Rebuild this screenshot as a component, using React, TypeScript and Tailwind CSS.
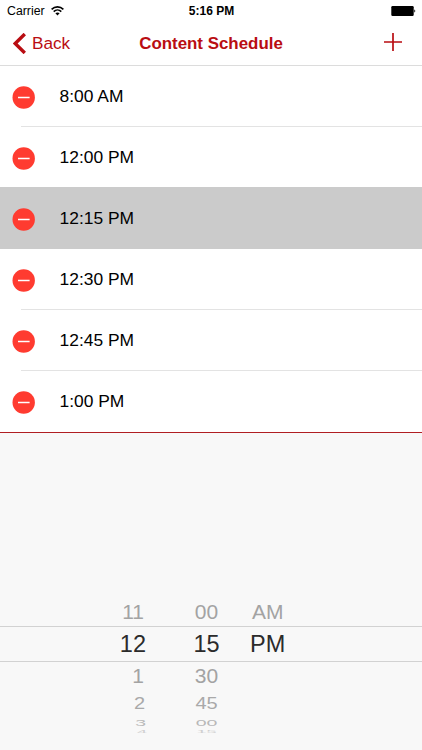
import React, { useState } from 'react';

const INITIAL_TIMES = ['8:00 AM', '12:00 PM', '12:15 PM', '12:30 PM', '12:45 PM', '1:00 PM'];

// The wheel flattens towards its lower edge, each row has its own height and squeeze
const WHEEL_ROWS = [
  { hour: '11', minute: '00', period: 'AM', row: 'h-[29px] text-[21px] text-[#a3a3a3]', hourPad: 'pr-[3px]', periodPad: 'pl-[2px]', squeeze: '' },
  { hour: '12', minute: '15', period: 'PM', row: 'h-9 border-y border-[#d2d2d2] pt-px text-[23.5px] text-[#2b2b2b]', hourPad: 'pr-px', periodPad: '', squeeze: '' },
  { hour: '1', minute: '30', period: '', row: 'h-[27px] text-[21px] text-[#a3a3a3]', hourPad: 'pr-[3px]', periodPad: '', squeeze: '' },
  { hour: '2', minute: '45', period: '', row: 'h-[27px] text-[20px] text-[#a9a9a9]', hourPad: 'pr-[2px]', periodPad: '', squeeze: 'scale-y-[0.82]' },
  { hour: '3', minute: '00', period: '', row: 'h-[13px] text-[19.5px] text-[#b8b8b8]', hourPad: 'pr-px', periodPad: '', squeeze: 'scale-y-[0.5]' },
  { hour: '4', minute: '15', period: '', row: 'h-[5px] text-[18px] text-[#cfcfcf]', hourPad: '', periodPad: '', squeeze: 'scale-y-[0.16]' },
];

const StatusBar: React.FC = () => (
  <div className="grid h-[22px] grid-cols-3 items-center pl-[7px] pr-1.5 text-[12px] leading-none text-black">
    <div className="flex items-center gap-[6px]">
      <span className="text-[12.3px]">Carrier</span>
      <svg width="13" height="10" viewBox="0 0 13 10" fill="none" stroke="black" strokeWidth="1.6">
        <path d="M0.6 3.4C4 0 9 0 12.4 3.4" />
        <path d="M2.7 5.6C4.9 3.4 8.1 3.4 10.3 5.6" />
        <path d="M6.5 9.6L4.4 7.3C5.6 6.2 7.4 6.2 8.6 7.3Z" fill="black" stroke="none" />
      </svg>
    </div>
    <span className="text-center font-bold">5:16 PM</span>
    <svg className="justify-self-end" width="25" height="10" viewBox="0 0 25 10">
      <rect x="0.3" y="0" width="22.4" height="10" rx="1.2" fill="black" />
      <path d="M23.3 3.4C24.6 3.8 24.6 6.2 23.3 6.6Z" fill="black" />
    </svg>
  </div>
);

const NavBar: React.FC = () => (
  <div className="grid h-[43px] grid-cols-[110px_1fr_110px] items-center text-[#b90d12]">
    <button type="button" className="flex items-center gap-[6px] pl-[13px] text-[17.2px] leading-none">
      <svg width="13" height="21" viewBox="0 0 13 21" fill="none" stroke="currentColor" strokeWidth="3.4">
        <path d="M11.8 1L2.2 10.5L11.8 20" />
      </svg>
      Back
    </button>
    <h1 className="whitespace-nowrap pt-px text-center text-[16.9px] font-bold leading-none">Content Schedule</h1>
    <button type="button" aria-label="Add" className="justify-self-end pb-[3px] pr-5">
      <svg width="18" height="18" viewBox="0 0 18 18" stroke="currentColor" strokeWidth="1.7">
        <path d="M9 0V18M0 9H18" />
      </svg>
    </button>
  </div>
);

const App: React.FC = () => {
  const [times, setTimes] = useState(INITIAL_TIMES);
  const [selected, setSelected] = useState('12:15 PM');

  return (
    <div className="flex h-[750px] w-[422px] flex-col overflow-hidden bg-white font-['Liberation_Sans',Arial,sans-serif]">
      <StatusBar />
      <NavBar />

      {/* Scheduled times */}
      <div className="h-[367px] shrink-0 border-t border-[#dcdcdc]">
        {times.map((time, i) => {
          const active = time === selected;
          const last = i === times.length - 1;
          const divided = !active && !last && times[i + 1] !== selected;
          return (
            <div
              key={time}
              onClick={() => setSelected(time)}
              className={`flex pl-3 ${active ? '-mt-px h-[62px] bg-[#cbcbcb] pt-px' : 'h-[61px] bg-white'}`}
            >
              <button
                type="button"
                aria-label={`Remove ${time}`}
                onClick={() => setTimes(times.filter((t) => t !== time))}
                className="w-[9px] shrink-0"
              >
                <svg className="mt-px" width="23" height="23" viewBox="0 0 23 23">
                  <circle cx="11.7" cy="11.5" r="11.2" fill="#ff3b30" />
                  <path d="M6 11.5H17.6" stroke="white" strokeWidth="1.5" />
                </svg>
              </button>
              <div className={`flex flex-1 items-center border-b pl-[38.6px] text-[17.4px] text-black ${divided ? 'border-[#e3e3e3]' : 'border-transparent'}`}>
                {time}
              </div>
            </div>
          );
        })}
      </div>

      {/* Time picker */}
      <div className="h-px shrink-0 bg-[#b01e23]" />
      <div className="flex-1 bg-[#f8f8f8] pt-[164px]">
        {WHEEL_ROWS.map(({ hour, minute, period, row, hourPad, periodPad, squeeze }, i) => (
          <div key={i} className={`grid grid-cols-[147px_117px_1fr] content-center items-center leading-none ${row}`}>
            <span className={`text-right ${hourPad} ${squeeze}`}>{hour}</span>
            <span className={`pl-[2px] text-center ${squeeze}`}>{minute}</span>
            <span className={`-ml-[14px] ${periodPad}`}>{period}</span>
          </div>
        ))}
      </div>
    </div>
  );
};

export default App;
